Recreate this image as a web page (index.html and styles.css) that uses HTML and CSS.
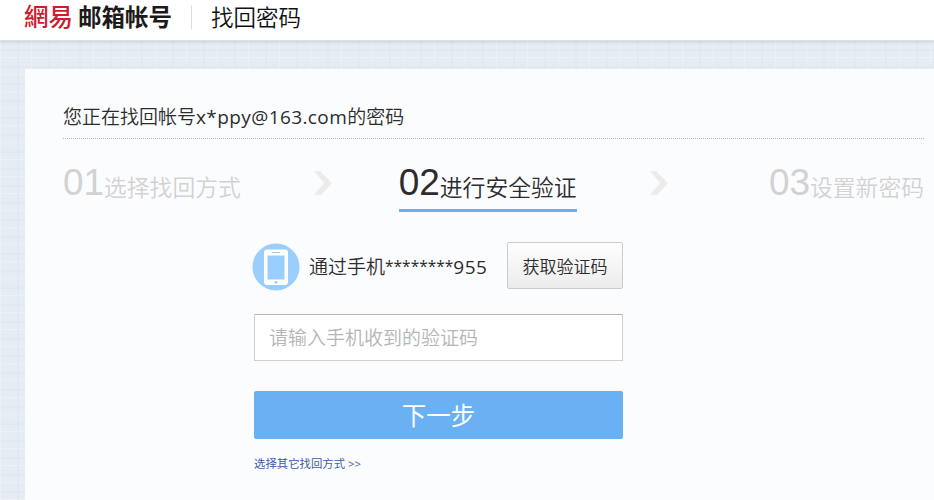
FILE: index.html
```html
<!DOCTYPE html>
<html lang="zh-CN">
<head>
    <meta charset="UTF-8">
    <title>找回密码</title>
    <link rel="stylesheet" href="styles.css">
</head>
<body>
    <header class="header">
        <div class="logo"><span class="logo-brand">網易</span><span class="logo-name">邮箱帐号</span></div>
        <h1 class="header-title">找回密码</h1>
    </header>

    <main class="panel">
        <h2 class="account">您正在找回帐号<span class="account-mail">x*ppy@163.com</span>的密码</h2>

        <div class="steps">
            <div class="step"><span class="num">01</span><span class="label">选择找回方式</span></div>
            <svg class="arrow arrow-first" width="18" height="24" viewBox="0 0 18 24"><path d="M0 0h6l12 12-11 12H0l10-12z"/></svg>
            <div class="step step-active"><span class="num">02</span><span class="label">进行安全验证</span></div>
            <svg class="arrow arrow-second" width="18" height="24" viewBox="0 0 18 24"><path d="M0 0h6l12 12-11 12H0l10-12z"/></svg>
            <div class="step step-last"><span class="num">03</span><span class="label">设置新密码</span></div>
        </div>

        <form class="form">
            <div class="phone-row">
                <svg class="phone-icon" width="48" height="48" viewBox="0 0 48 48">
                    <circle cx="24" cy="24" r="23.5" fill="#99ceff"/>
                    <rect x="12" y="6.5" width="24" height="35.5" rx="3" fill="#fff"/>
                    <rect x="15.5" y="12.5" width="17" height="24" fill="#99ceff"/>
                    <path d="M20 9.5h8" stroke="#99ceff" stroke-width="1"/>
                    <circle cx="24" cy="39.3" r="1.4" fill="#99ceff"/>
                </svg>
                <span class="phone-text">通过手机<span class="phone-mask">********</span><span class="phone-num">955</span></span>
                <button type="button" class="btn-code">获取验证码</button>
            </div>
            <input class="code-input" type="text" placeholder="请输入手机收到的验证码">
            <button type="button" class="btn-next">下一步</button>
            <a class="other" href="#">选择其它找回方式 &gt;&gt;</a>
        </form>
    </main>
</body>
</html>
```

FILE: styles.css
```css
* {
    box-sizing: border-box;
}

/* Fond tissé */
body {
    margin: 0;
    height: 500px;
    overflow: hidden;
    font-family: "Open Sans", "Noto Sans CJK SC", sans-serif;
    color: #2c2c2c;
    background-color: #e5ecf4;
    background-image:
        repeating-linear-gradient(90deg, rgba(255, 255, 255, 0.25) 0 1px, transparent 1px 17px, rgba(208, 221, 233, 0.2) 17px 19px, transparent 19px 31px),
        repeating-linear-gradient(0deg, rgba(255, 255, 255, 0.25) 0 1px, transparent 1px 7px, rgba(208, 221, 233, 0.2) 7px 9px, transparent 9px 17px);
}

.header {
    display: flex;
    height: 41px;
    padding-left: 24px;
    background: #fff;
    border-bottom: 1px solid #dce1e6;
    box-shadow: 0 1px 3px rgba(120, 140, 160, 0.3);
}

.logo {
    display: flex;
    width: 168px;
    height: 24px;
    margin-top: 5px;
    border-right: 1px solid #ddd;
    line-height: 24px;
    white-space: nowrap;
}

.logo-brand {
    width: 54px;
    font-size: 24.5px;
    font-weight: 500;
    line-height: 23px;
    color: #cf1b2b;
}

.logo-name {
    font-size: 23.5px;
    font-weight: 700;
    color: #1d1a19;
}

.header-title {
    margin: 3px 0 0 19px;
    font-size: 22.5px;
    font-weight: 350;
    line-height: 30px;
    color: #111;
}

.panel {
    height: 431px;
    margin: 28px 0 0 25px;
    padding: 32px 10px 0 38px;
    background: #fbfcfe;
}

.account {
    height: 38px;
    margin: 0;
    border-bottom: 1px dotted #b5b8bb;
    font-size: 19px;
    font-weight: 350;
    line-height: 33px;
}

.account-mail {
    font-weight: 400;
    letter-spacing: 0.4px;
}

/* Étapes */
.steps {
    display: flex;
    height: 73px;
}

.step {
    display: flex;
    align-items: baseline;
    height: 73px;
    line-height: 87px;
    color: #d2d2d2;
    white-space: nowrap;
}

.num {
    width: 41px;
    font-family: "Liberation Sans", Arial, sans-serif;
    font-size: 37px;
}

.label {
    position: relative;
    top: 1px;
    font-size: 22.8px;
    font-weight: 350;
}

.step-active {
    width: 178px;
    border-bottom: 3px solid #68b0f2;
    color: #2c2c2c;
}

.step-last {
    margin-left: auto;
}

.arrow {
    margin-top: 32px;
    fill: #ebebec;
}

.arrow-first {
    margin-left: 73px;
    margin-right: 67px;
}

.arrow-second {
    margin-left: 73px;
}

/* Formulaire */
.form {
    width: 369px;
    margin: 30px 0 0 191px;
}

.phone-row {
    display: flex;
    height: 48px;
}

.phone-icon {
    flex: none;
    margin: 1px 0 0 -2px;
}

.phone-text {
    margin-left: 9px;
    font-size: 19px;
    font-weight: 350;
    line-height: 51px;
    white-space: nowrap;
}

.phone-mask {
    font-size: 15.5px;
    font-weight: 400;
    line-height: 1;
    vertical-align: 2px;
}

.phone-num {
    font-weight: 400;
    letter-spacing: 0.5px;
}

.btn-code {
    width: 116px;
    height: 47px;
    margin-left: auto;
    padding: 0 0 1px;
    border: 1px solid #ccc;
    border-radius: 2px;
    background: linear-gradient(#fefefe, #ececec);
    font-family: inherit;
    font-size: 17px;
    font-weight: 350;
    color: #2c2c2c;
}

.code-input {
    display: block;
    width: 369px;
    height: 47px;
    margin-top: 24px;
    padding: 0 14px;
    border: 1px solid #d0d0d0;
    border-top-color: #b5b5b5;
    background: #fff;
    font-family: inherit;
    font-size: 19px;
    font-weight: 350;
}

.code-input::placeholder {
    color: #b5b5b5;
}

.btn-next {
    display: block;
    width: 369px;
    height: 48px;
    margin-top: 30px;
    padding: 0 0 1px;
    border: none;
    border-radius: 2px;
    background: #69b1f2;
    font-family: inherit;
    font-size: 24.5px;
    font-weight: 400;
    color: #fff;
}

.other {
    display: block;
    margin-top: 16px;
    font-size: 11.4px;
    line-height: 18px;
    color: #3d5fa3;
    text-decoration: none;
}
```
